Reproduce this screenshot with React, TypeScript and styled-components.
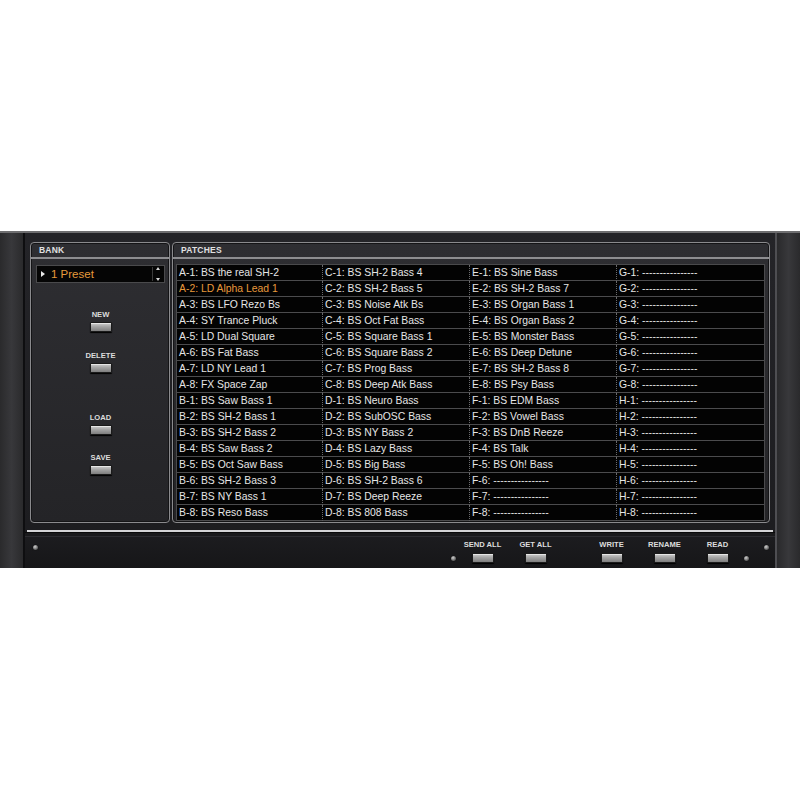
import React from 'react';
import styled, { createGlobalStyle } from 'styled-components';

const GlobalStyle = createGlobalStyle`
  html, body {
    margin: 0;
    padding: 0;
    background: #ffffff;
  }
  body {
    font-family: "Liberation Sans", Arial, sans-serif;
  }
`;

const Page = styled.div`
  width: 800px;
  height: 800px;
  padding-top: 231px;
  box-sizing: border-box;
  background: #ffffff;
`;

const Device = styled.div`
  display: grid;
  grid-template-columns: 25px 750px 25px;
  height: 337px;
  border-top: 2px solid #6e6e70;
  box-sizing: border-box;
  background: #1d1d20;
`;

const SideStrip = styled.div<{ right?: boolean }>`
  background: linear-gradient(90deg, #2a2a2c, #38383b 50%, #2a2a2c);
  border-left: ${p => (p.right ? '2px solid #4e4e52' : 'none')};
  border-right: ${p => (p.right ? 'none' : '2px solid #0e0e10')};
`;

const Main = styled.div`
  display: flex;
  flex-direction: column;
  background: linear-gradient(180deg, #242428, #1c1c1f);
`;

const PanelsRow = styled.div`
  display: flex;
  gap: 2px;
  padding: 9px 5px 0 5px;
  height: 290px;
  box-sizing: border-box;
`;

const Panel = styled.div<{ w: number }>`
  display: flex;
  flex-direction: column;
  flex: 0 0 ${p => p.w}px;
  height: 281px;
  box-sizing: border-box;
  border: 1px solid #8a8a8d;
  border-radius: 4px;
  box-shadow: inset 0 0 0 1px #141416;
  background: linear-gradient(180deg, #2e2e32, #242427);
`;

const PanelHeader = styled.div`
  height: 14px;
  line-height: 15px;
  padding-left: 8px;
  font-size: 8.5px;
  font-weight: bold;
  color: #e0e0e0;
  letter-spacing: 0.2px;
  border-bottom: 2px solid #8d8d90;
`;

const BankBody = styled.div`
  display: flex;
  flex-direction: column;
  align-items: center;
  padding: 6px 4px 0 5px;
`;

const BankSelect = styled.div`
  align-self: stretch;
  display: flex;
  align-items: center;
  height: 18px;
  box-sizing: border-box;
  background: #050505;
  border: 1px solid #4a4a4c;
`;

const PlayArrow = styled.span`
  width: 0;
  height: 0;
  margin: 0 6px 0 4px;
  border-top: 3px solid transparent;
  border-bottom: 3px solid transparent;
  border-left: 4px solid #e8e8e8;
`;

const BankName = styled.span`
  flex: 1;
  font-size: 11.5px;
  color: #e69a3c;
  line-height: 16px;
`;

const Spinner = styled.div`
  display: flex;
  flex-direction: column;
  justify-content: space-between;
  align-items: center;
  width: 9px;
  height: 14px;
  margin-right: 2px;
  border-left: 1px solid #3a3a3a;
`;

const SpinArrow = styled.span<{ down?: boolean }>`
  width: 0;
  height: 0;
  border-left: 2px solid transparent;
  border-right: 2px solid transparent;
  ${p => (p.down ? 'border-top: 3px solid #d8d8d8;' : 'border-bottom: 3px solid #d8d8d8;')}
`;

const Control = styled.div<{ mt: number }>`
  display: flex;
  flex-direction: column;
  align-items: center;
  gap: 3px;
  margin-top: ${p => p.mt}px;
`;

const Label = styled.span`
  font-size: 7.6px;
  font-weight: bold;
  color: #dcdcdc;
  line-height: 8px;
  white-space: nowrap;
`;

const HwButton = styled.div`
  width: 22px;
  height: 10px;
  box-sizing: border-box;
  border: 1px solid #1a1a1a;
  border-radius: 1px;
  background: linear-gradient(180deg, #cfcfcf, #a4a4a4 45%, #7e7e7e);
  box-shadow: 0 1px 1px #000, inset 0 1px 0 #e6e6e6;
`;

const PatchBody = styled.div`
  padding: 5px 4px 0 3px;
`;

const PatchGrid = styled.div`
  display: grid;
  grid-template-columns: 146px 147px 147px 147px;
  grid-template-rows: repeat(16, 16px);
  grid-auto-flow: column;
  background: #030303;
  border: 1px solid #4a4a4c;
  border-bottom: none;
`;

const Cell = styled.div<{ active?: boolean; last?: boolean }>`
  box-sizing: border-box;
  padding-left: 2px;
  font-size: 10.4px;
  line-height: 15px;
  white-space: nowrap;
  overflow: hidden;
  color: ${p => (p.active ? '#e8993b' : '#e6e6e6')};
  border-bottom: 1px solid #4b4b4d;
  border-right: ${p => (p.last ? 'none' : '1px dotted #6a6a6c')};
`;

const Rail = styled.div`
  height: 2px;
  margin: 7px 2px 0 2px;
  background: #d4d4d6;
`;

const BottomBar = styled.div`
  flex: 1;
  display: flex;
  align-items: flex-start;
  padding: 0 6px 0 8px;
  background: linear-gradient(180deg, #1d1d20, #161618);
  border-top: 1px solid #0a0a0a;
  box-shadow: inset 0 4px 0 -1px #1a1a1c, inset 0 5px 0 -1px #2c2c30;
`;

const Screw = styled.span<{ top: number; ml?: number }>`
  width: 5px;
  height: 5px;
  margin-top: ${p => p.top}px;
  margin-left: ${p => p.ml || 0}px;
  border-radius: 50%;
  background: radial-gradient(circle at 40% 35%, #d0d0d0, #6a6a6a 60%, #2a2a2a);
  box-shadow: 0 0 1px #000;
`;

const Spacer = styled.div`
  flex: 1;
`;

const BarGroup = styled.div<{ gap?: number }>`
  display: flex;
  margin-left: ${p => p.gap || 0}px;
`;

const BarControl = styled.div`
  width: 53px;
  display: flex;
  flex-direction: column;
  align-items: center;
  gap: 4px;
  padding-top: 8px;
`;

const patches: string[] = [
  'A-1: BS the real SH-2', 'A-2: LD Alpha Lead 1', 'A-3: BS LFO Rezo Bs', 'A-4: SY Trance Pluck',
  'A-5: LD Dual Square', 'A-6: BS Fat Bass', 'A-7: LD NY Lead 1', 'A-8: FX Space Zap',
  'B-1: BS Saw Bass 1', 'B-2: BS SH-2 Bass 1', 'B-3: BS SH-2 Bass 2', 'B-4: BS Saw Bass 2',
  'B-5: BS Oct Saw Bass', 'B-6: BS SH-2 Bass 3', 'B-7: BS NY Bass 1', 'B-8: BS Reso Bass',
  'C-1: BS SH-2 Bass 4', 'C-2: BS SH-2 Bass 5', 'C-3: BS Noise Atk Bs', 'C-4: BS Oct Fat Bass',
  'C-5: BS Square Bass 1', 'C-6: BS Square Bass 2', 'C-7: BS Prog Bass', 'C-8: BS Deep Atk Bass',
  'D-1: BS Neuro Bass', 'D-2: BS SubOSC Bass', 'D-3: BS NY Bass 2', 'D-4: BS Lazy Bass',
  'D-5: BS Big Bass', 'D-6: BS SH-2 Bass 6', 'D-7: BS Deep Reeze', 'D-8: BS 808 Bass',
  'E-1: BS Sine Bass', 'E-2: BS SH-2 Bass 7', 'E-3: BS Organ Bass 1', 'E-4: BS Organ Bass 2',
  'E-5: BS Monster Bass', 'E-6: BS Deep Detune', 'E-7: BS SH-2 Bass 8', 'E-8: BS Psy Bass',
  'F-1: BS EDM Bass', 'F-2: BS Vowel Bass', 'F-3: BS DnB Reeze', 'F-4: BS Talk',
  'F-5: BS Oh! Bass', 'F-6: ----------------', 'F-7: ----------------', 'F-8: ----------------',
  ...['G', 'H'].flatMap(b => [1, 2, 3, 4, 5, 6, 7, 8].map(n => `${b}-${n}: ----------------`)),
];

const bankButtons = [
  { label: 'NEW', mt: 28 },
  { label: 'DELETE', mt: 20 },
  { label: 'LOAD', mt: 41 },
  { label: 'SAVE', mt: 19 },
];

export default function App() {
  return (
    <Page>
      <GlobalStyle />
      <Device>
        <SideStrip />
        <Main>
          <PanelsRow>
            <Panel w={140}>
              <PanelHeader>BANK</PanelHeader>
              <BankBody>
                <BankSelect>
                  <PlayArrow />
                  <BankName>1 Preset</BankName>
                  <Spinner>
                    <SpinArrow />
                    <SpinArrow down />
                  </Spinner>
                </BankSelect>
                {bankButtons.map(b => (
                  <Control key={b.label} mt={b.mt}>
                    <Label>{b.label}</Label>
                    <HwButton />
                  </Control>
                ))}
              </BankBody>
            </Panel>
            <Panel w={598}>
              <PanelHeader>PATCHES</PanelHeader>
              <PatchBody>
                <PatchGrid>
                  {patches.map((p, i) => (
                    <Cell key={p} active={i === 1} last={i >= 48}>
                      {p}
                    </Cell>
                  ))}
                </PatchGrid>
              </PatchBody>
            </Panel>
          </PanelsRow>
          <Rail />
          <BottomBar>
            <Screw top={12} />
            <Spacer />
            <Screw top={23} />
            <BarGroup>
              <BarControl><Label>SEND ALL</Label><HwButton /></BarControl>
              <BarControl><Label>GET ALL</Label><HwButton /></BarControl>
            </BarGroup>
            <BarGroup gap={23}>
              <BarControl><Label>WRITE</Label><HwButton /></BarControl>
              <BarControl><Label>RENAME</Label><HwButton /></BarControl>
              <BarControl><Label>READ</Label><HwButton /></BarControl>
            </BarGroup>
            <Screw top={23} />
            <Screw top={12} ml={15} />
          </BottomBar>
        </Main>
        <SideStrip right />
      </Device>
    </Page>
  );
}
